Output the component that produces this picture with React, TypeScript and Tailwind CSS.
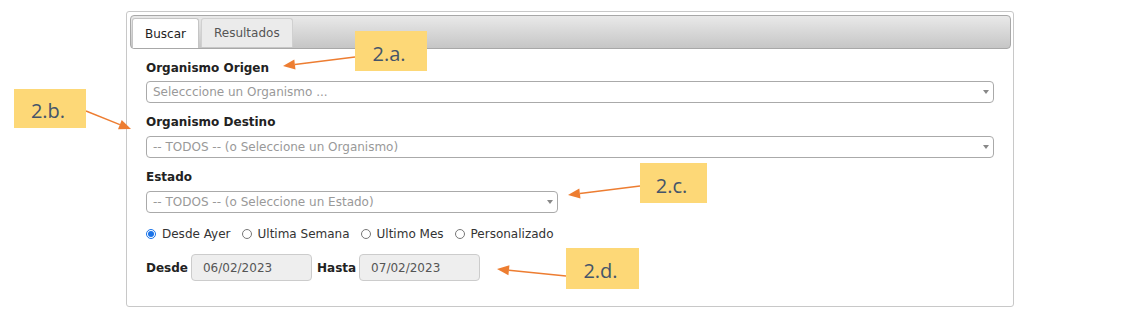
import React from "react";

type Note = { label: string; left: number; top: number; w: number; h: number };

const notes: Note[] = [
  { label: "2.a.", left: 355, top: 31, w: 72, h: 40 },
  { label: "2.b.", left: 14, top: 89, w: 72, h: 39 },
  { label: "2.c.", left: 640, top: 163, w: 67, h: 40 },
  { label: "2.d.", left: 566, top: 248, w: 73, h: 41 },
];

// flechas: desde el borde del recuadro hasta la punta
const arrows: [number, number, number, number][] = [
  [355, 57, 283, 66],
  [86, 111, 131, 129],
  [640, 186, 568, 195],
  [566, 276, 497, 269],
];

const Arrow: React.FC<{ a: [number, number, number, number] }> = ({ a }) => {
  const [x1, y1, x2, y2] = a;
  const dx = x2 - x1;
  const dy = y2 - y1;
  const len = Math.hypot(dx, dy);
  const ux = dx / len;
  const uy = dy / len;
  const head = 12;
  const half = 5;
  const bx = x2 - ux * head;
  const by = y2 - uy * head;
  const pts = `${x2},${y2} ${bx - uy * half},${by + ux * half} ${bx + uy * half},${by - ux * half}`;
  return (
    <g>
      <line x1={x1} y1={y1} x2={bx} y2={by} stroke="#ed7d31" strokeWidth={1.4} />
      <polygon points={pts} fill="#ed7d31" />
    </g>
  );
};

const Caret: React.FC = () => (
  <span className="h-0 w-0 border-l-[3px] border-r-[3px] border-t-[4px] border-l-transparent border-r-transparent border-t-[#888]" />
);

const Select: React.FC<{ text: string; className?: string }> = ({ text, className = "" }) => (
  <div
    className={`flex h-[22px] items-center justify-between rounded-[4px] border border-[#aaa] bg-white pl-[6px] pr-[4px] text-[#999] ${className}`}
  >
    <span className="leading-[14px]">{text}</span>
    <Caret />
  </div>
);

const Radio: React.FC<{ label: string; checked?: boolean }> = ({ label, checked }) => (
  <div className="flex items-center gap-[6px]">
    {checked ? (
      <span className="flex h-[10px] w-[10px] items-center justify-center rounded-full border border-[#1a73e8]">
        <span className="h-[6px] w-[6px] rounded-full bg-[#1a73e8]" />
      </span>
    ) : (
      <span className="h-[10px] w-[10px] rounded-full border border-[#777]" />
    )}
    <span className="leading-[14px] text-[#333]">{label}</span>
  </div>
);

const App: React.FC = () => {
  return (
    <div className="relative h-[326px] w-[1124px] overflow-hidden bg-white font-['DejaVu_Sans',sans-serif] text-[12px]">
      {/* Panel de búsqueda */}
      <div className="ml-[126px] mt-[11px] h-[296px] w-[888px] rounded-[3px] border border-[#c8c8c8] bg-white">
        <div className="ml-[3px] mr-[2px] mt-[3px] flex h-[34px] items-start rounded-[4px] border border-[#a8a8a8] bg-gradient-to-b from-[#e9e9e9] to-[#c6c6c6] pl-[1px] pt-[2px]">
          <div className="flex h-[30px] items-center rounded-t-[3px] border border-b-0 border-[#c5c5c5] bg-white px-[12px] text-[#222]">
            Buscar
          </div>
          <div className="ml-[2px] flex h-[29px] items-center rounded-t-[3px] border border-b-0 border-[#d0d0d0] bg-[#ebebeb] px-[12px] text-[#555]">
            Resultados
          </div>
        </div>

        <div className="px-[19px]">
          <div className="mt-[12px] font-bold leading-[14px] text-[#222]">Organismo Origen</div>
          <Select className="mt-[6px]" text="Selecccione un Organismo ..." />

          <div className="mt-[12px] font-bold leading-[14px] text-[#222]">Organismo Destino</div>
          <Select className="mt-[7px]" text="-- TODOS -- (o Seleccione un Organismo)" />

          <div className="mt-[12px] font-bold leading-[14px] text-[#222]">Estado</div>
          <Select className="mt-[7px] w-[412px]" text="-- TODOS -- (o Seleccione un Estado)" />

          <div className="mt-[14px] flex items-center gap-[11px]">
            <Radio label="Desde Ayer" checked />
            <Radio label="Ultima Semana" />
            <Radio label="Ultimo Mes" />
            <Radio label="Personalizado" />
          </div>

          <div className="mt-[13px] flex items-center">
            <span className="font-bold text-[#222]">Desde</span>
            <div className="ml-[3px] flex h-[27px] w-[121px] items-center rounded-[4px] border border-[#ccc] bg-[#eeeeee] pl-[11px] text-[#555]">
              06/02/2023
            </div>
            <span className="ml-[5px] font-bold text-[#222]">Hasta</span>
            <div className="ml-[3px] flex h-[27px] w-[121px] items-center rounded-[4px] border border-[#ccc] bg-[#eeeeee] pl-[11px] text-[#555]">
              07/02/2023
            </div>
          </div>
        </div>
      </div>

      {/* Anotaciones */}
      <svg className="pointer-events-none absolute left-0 top-0" width={1124} height={326}>
        {arrows.map((a, i) => (
          <Arrow key={i} a={a} />
        ))}
      </svg>
      {notes.map((n) => (
        <div
          key={n.label}
          className="absolute flex items-center justify-center bg-[#fdd877] pr-[4px] pt-[5px] font-['Open_Sans',sans-serif] text-[20px] text-[#44546a]"
          style={{ left: n.left, top: n.top, width: n.w, height: n.h }}
        >
          {n.label}
        </div>
      ))}
    </div>
  );
};

export default App;
